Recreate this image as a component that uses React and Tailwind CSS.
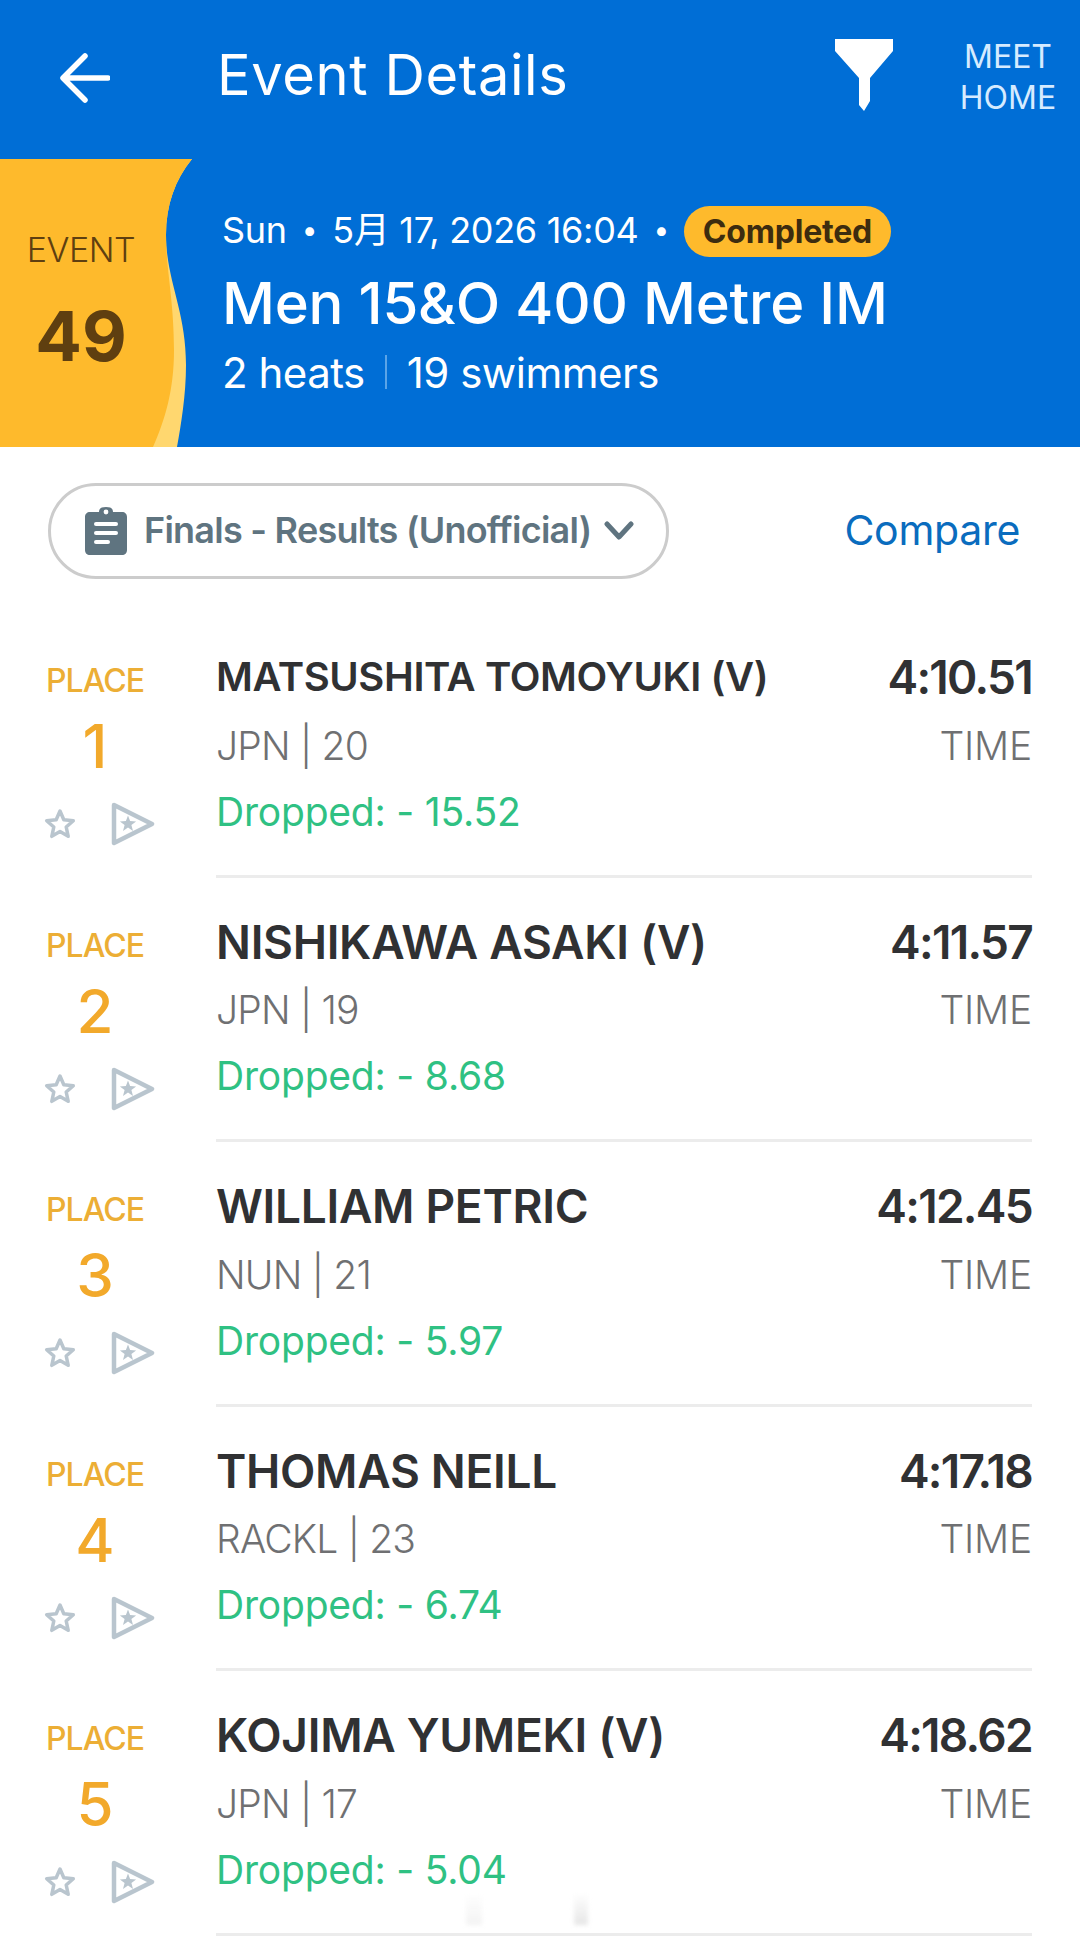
const rows = [
  { place: 1, name: "MATSUSHITA TOMOYUKI (V)", info: "JPN | 20", drop: "Dropped: - 15.52", time: "4:10.51", small: true },
  { place: 2, name: "NISHIKAWA ASAKI (V)", info: "JPN | 19", drop: "Dropped: - 8.68", time: "4:11.57" },
  { place: 3, name: "WILLIAM PETRIC", info: "NUN | 21", drop: "Dropped: - 5.97", time: "4:12.45" },
  { place: 4, name: "THOMAS NEILL", info: "RACKL | 23", drop: "Dropped: - 6.74", time: "4:17.18" },
  { place: 5, name: "KOJIMA YUMEKI (V)", info: "JPN | 17", drop: "Dropped: - 5.04", time: "4:18.62" },
];

function StarPts(cx, cy, R, r) {
  const p = [];
  for (let i = 0; i < 10; i++) {
    const a = -Math.PI / 2 + (i * Math.PI) / 5;
    const q = i % 2 ? r : R;
    p.push(`${(cx + q * Math.cos(a)).toFixed(1)},${(cy + q * Math.sin(a)).toFixed(1)}`);
  }
  return p.join(" ");
}

function Row({ r }) {
  return (
    <div className="flex h-[264.5px]">
      <div className="w-[216px] shrink-0">
        <div className="w-[190px] pt-[45px] flex flex-col items-center">
          <div className="h-[46px] leading-[46px] text-[32px] font-medium tracking-[-1px] text-[#ecae35]">PLACE</div>
          <div className="h-[84px] leading-[84px] text-[60px] font-medium text-[#f2a92b]">{r.place}</div>
        </div>
        <div className="flex items-center pl-[42px] gap-[33px] mt-[14px]">
          <svg width="36" height="36" viewBox="0 0 36 36" fill="none">
            <polygon points={StarPts(18, 19, 14, 6.5)} stroke="#b9c5ce" strokeWidth="3.5" strokeLinejoin="round" />
          </svg>
          <svg width="46" height="44" viewBox="0 0 46 44" fill="none">
            <polygon points="3,3 41,22 3,41" stroke="#b9c5ce" strokeWidth="4.5" strokeLinejoin="round" />
            <polygon points={StarPts(17, 22, 8.5, 3.6)} fill="#b9c5ce" />
          </svg>
        </div>
      </div>
      <div className="flex-1 mr-[48px] border-b-[3px] border-[#ececec] pt-[31px]">
        <div className="flex justify-between items-center h-[67px]">
          <div className={r.small ? "text-[40px] font-semibold tracking-[-0.4px] text-[#303133] -mt-[2px]" : "text-[46px] font-semibold tracking-[-0.3px] text-[#303133]"}>{r.name}</div>
          <div className="text-[46px] font-semibold tracking-[-1.7px] text-[#303133]">{r.time}</div>
        </div>
        <div className="flex justify-between items-center h-[70px]">
          <div className="text-[39px] font-light tracking-[-0.8px] text-[#6f7072]">{r.info}</div>
          <div className="text-[39px] font-light tracking-[-0.2px] text-[#6f7072]">TIME</div>
        </div>
        <div className="flex items-center h-[62px] text-[39px] font-normal tracking-[-0.2px] text-[#2fc183]">{r.drop}</div>
      </div>
    </div>
  );
}

export default function App() {
  return (
    <div className="relative w-[1080px] h-[1937px] overflow-hidden bg-white font-['Inter',sans-serif]">
      <div className="h-[447px] bg-[#006ed6] text-white">
        <div className="h-[159px] flex items-center">
          <div className="w-[217px] pl-[60px] shrink-0 -mt-[4px]">
            <svg width="50" height="50" viewBox="0 0 50 50" fill="none" stroke="white" strokeWidth="5.5" strokeLinecap="round" strokeLinejoin="round">
              <path d="M48 25H4M25 3L3 25L25 47" />
            </svg>
          </div>
          <div className="flex-1 text-[56px] font-normal tracking-[0.6px] leading-none -mt-[9px]">Event Details</div>
          <svg className="mr-[54px] -mt-[10px]" width="58" height="72" viewBox="0 0 58 72" fill="white">
            <path d="M0 0H58V12L35 39V62L29 72L24 66V39L0 12Z" />
          </svg>
          <div className="w-[122px] mr-[11px] text-center text-[32px] leading-[41px] font-normal text-[#d6ebff] -mt-[6px]">
            <div>MEET</div>
            <div>HOME</div>
          </div>
        </div>
        <div className="h-[288px] flex">
          <div className="relative w-[222px] shrink-0">
            <svg className="absolute top-0 left-0" width="200" height="288" viewBox="0 159 200 288">
              <path d="M192 159C175 180 166 205 166 235C166 280 186 310 186 365C186 395 181 425 177 447H150V159Z" fill="#ffd76f" />
              <path d="M0 159H192C175 180 166 205 166 235C166 270 174 300 174 350C174 390 165 420 153 447H0Z" fill="#feba2c" />
            </svg>
            <div className="relative w-[162px] flex flex-col items-center text-[#5f3f10]">
              <div className="mt-[68px] h-[46px] leading-[46px] text-[34px] font-light tracking-[-0.5px]">EVENT</div>
              <div className="mt-[21px] h-[84px] leading-[84px] text-[69px] font-bold">49</div>
            </div>
          </div>
          <div className="flex-1">
            <div className="mt-[47px] h-[51px] flex items-center text-[36px] tracking-[-0.3px] font-normal">
              <span className="-mt-[4px]">Sun</span>
              <span className="mx-[15px] -mt-[4px] text-[28px]">•</span>
              <span className="-mt-[4px] font-['Inter','Noto_Sans_CJK_SC',sans-serif]">5月 17, 2026 16:04</span>
              <span className="mx-[15px] -mt-[4px] text-[28px]">•</span>
              <span className="h-[51px] w-[207px] rounded-full bg-[#feba2c] flex items-center justify-center text-[32px] font-bold tracking-[-0.2px] text-[#3d2c0f]">Completed</span>
            </div>
            <div className="mt-[12px] h-[68px] leading-[68px] text-[58px] font-medium tracking-[-0.2px]">Men 15&amp;O 400 Metre IM</div>
            <div className="mt-[10px] flex items-center h-[50px] text-[42px] font-normal tracking-[-0.5px]">
              <span>2 heats</span>
              <span className="mx-[20px] w-[2px] h-[34px] bg-[#5aa4e8]"></span>
              <span>19 swimmers</span>
            </div>
          </div>
        </div>
      </div>

      <div className="h-[166px] flex items-start justify-between pt-[36px] pl-[48px] pr-[60px]">
        <div className="w-[621px] h-[96px] rounded-full border-[3px] border-[#cccccc] flex items-center pl-[34px]">
          <svg width="42" height="48" viewBox="0 0 42 48">
            <path d="M5 5H14C14 1 17 0 21 0C25 0 28 1 28 5H37C40 5 42 7 42 10V43C42 46 40 48 37 48H5C2 48 0 46 0 43V10C0 7 2 5 5 5Z" fill="#5f7480" />
            <circle cx="21" cy="5" r="2.4" fill="white" />
            <rect x="9" y="15" width="24" height="4" rx="2" fill="white" />
            <rect x="9" y="24" width="24" height="4" rx="2" fill="white" />
            <rect x="9" y="33" width="16" height="4" rx="2" fill="white" />
          </svg>
          <span className="ml-[17px] -mt-[2px] text-[36px] font-semibold tracking-[-0.75px] text-[#5f7480]">Finals - Results (Unofficial)</span>
          <svg className="ml-[13px]" width="30" height="20" viewBox="0 0 30 20" fill="none" stroke="#5f7480" strokeWidth="5" strokeLinecap="round" strokeLinejoin="round">
            <path d="M3 3L15 16L27 3" />
          </svg>
        </div>
        <div className="h-[96px] flex items-center text-[41px] font-normal tracking-[-0.3px] text-[#0a6cbe]">Compare</div>
      </div>

      {rows.map((r) => (
        <Row key={r.place} r={r} />
      ))}

      <div className="absolute left-[466px] top-[1893px] w-[16px] h-[32px] bg-gradient-to-b from-transparent to-[#f3f3f3] blur-[2px]"></div>
      <div className="absolute left-[574px] top-[1893px] w-[14px] h-[32px] bg-gradient-to-b from-transparent to-[#e6e6e6] blur-[2px]"></div>
    </div>
  );
}
